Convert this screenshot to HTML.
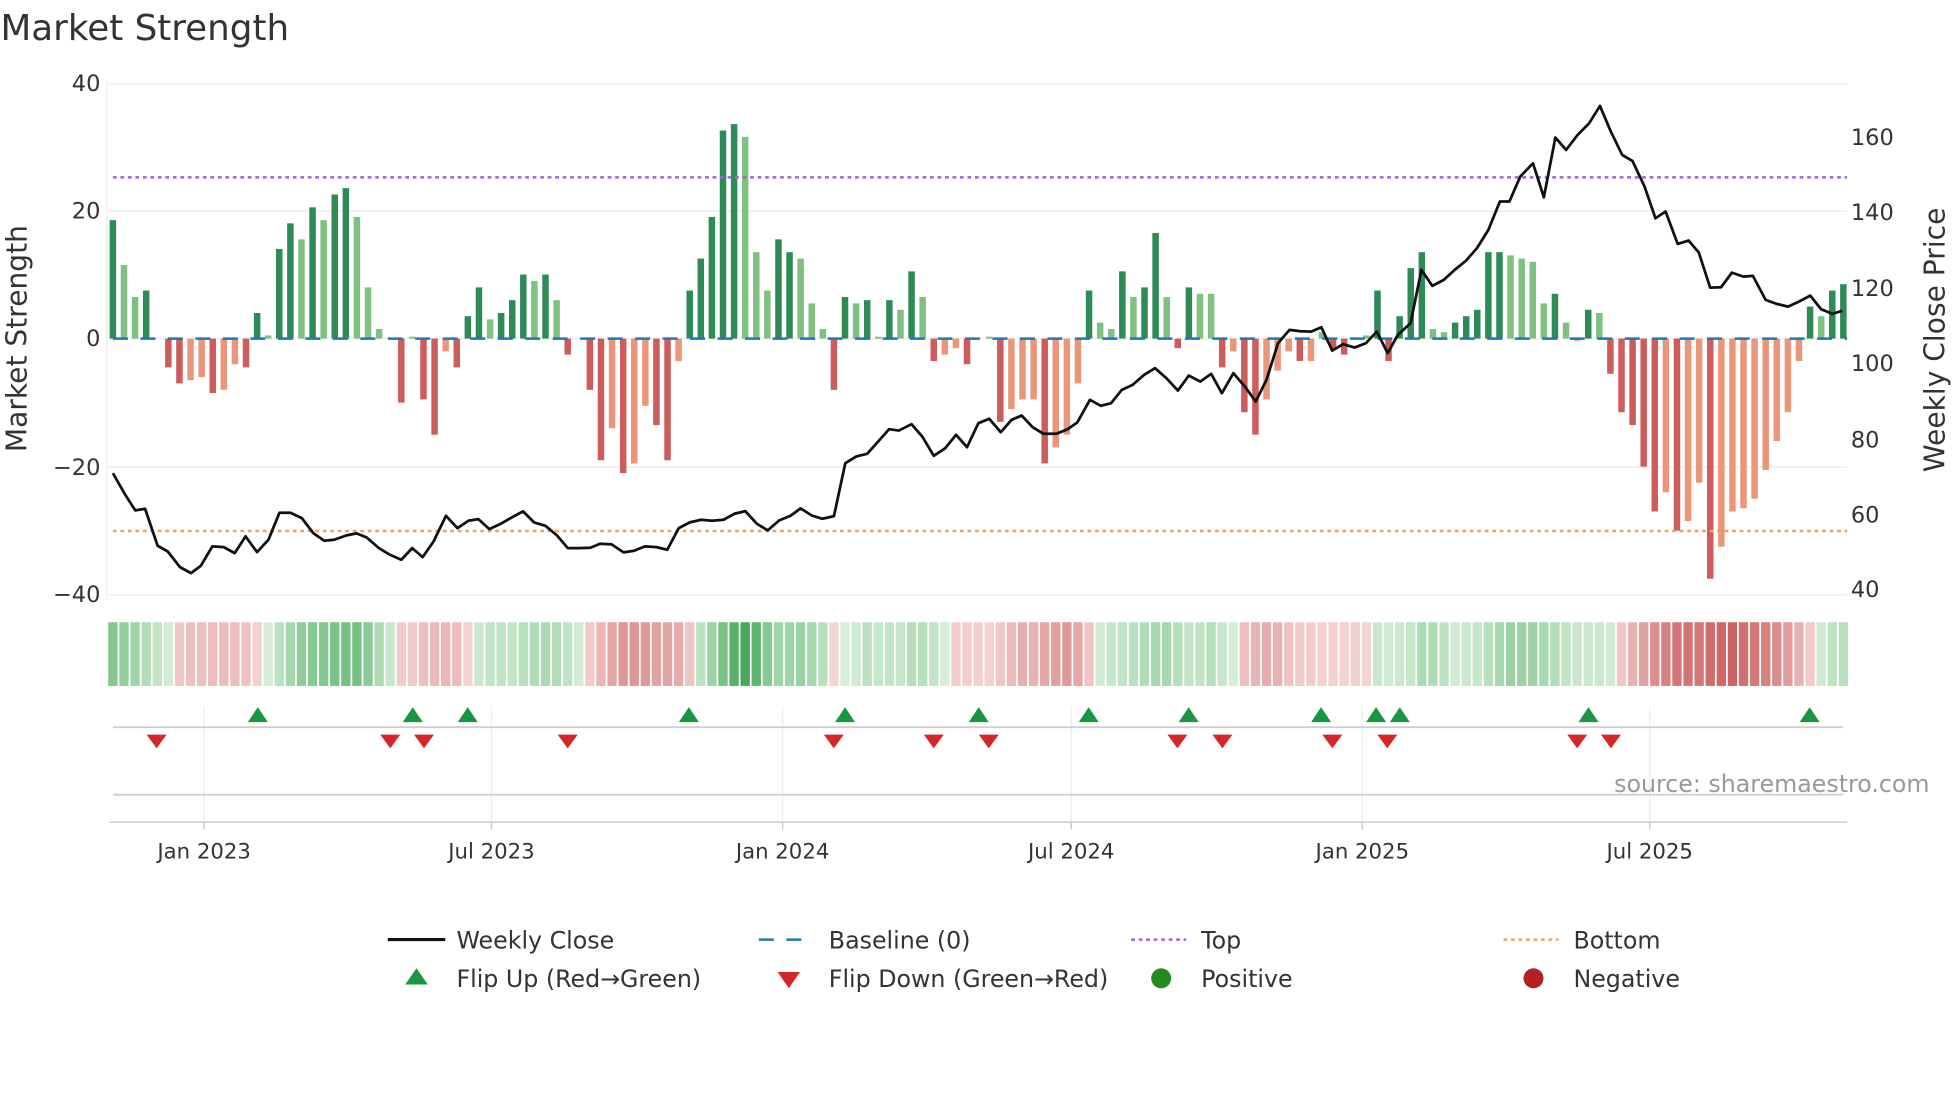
<!DOCTYPE html>
<html><head><meta charset="utf-8"><style>
html,body{margin:0;padding:0;background:#fff;}
svg{display:block;font-family:"DejaVu Sans","Liberation Sans",sans-serif;}
</style></head><body>
<svg id="s" width="1960" height="1102" viewBox="0 0 1568 882" xmlns="http://www.w3.org/2000/svg">
<rect width="1568" height="882" fill="#fff"/>
<g stroke="#eeeeee" stroke-width="1.2">
<line x1="87" y1="67" x2="1478" y2="67"/><line x1="87" y1="169" x2="1478" y2="169"/>
<line x1="87" y1="271" x2="1478" y2="271"/><line x1="87" y1="374" x2="1478" y2="374"/>
<line x1="87" y1="476" x2="1478" y2="476"/>
<line x1="85" y1="64" x2="85" y2="480"/>
</g>
<g stroke="#eeeeee" stroke-width="1">
<line x1="163" y1="565" x2="163" y2="658"/><line x1="393" y1="565" x2="393" y2="658"/>
<line x1="626" y1="565" x2="626" y2="658"/><line x1="857" y1="565" x2="857" y2="658"/>
<line x1="1090" y1="565" x2="1090" y2="658"/><line x1="1320" y1="565" x2="1320" y2="658"/>
</g>
<g id="bars"></g>
<line x1="90" y1="271" x2="1478" y2="271" stroke="#1f77b4" stroke-width="2" stroke-dasharray="12,10"/>
<line x1="90" y1="142" x2="1478" y2="142" stroke="#9966dd" stroke-width="2" stroke-dasharray="3,3"/>
<line x1="90" y1="425" x2="1478" y2="425" stroke="#f0a060" stroke-width="2" stroke-dasharray="3,3"/>
<polyline id="price" fill="none" stroke="#111" stroke-width="2.2" stroke-linejoin="round"/>
<g id="strip"></g>
<line x1="90" y1="582" x2="1475" y2="582" stroke="#cfcfcf" stroke-width="1.5"/>
<line x1="90" y1="636" x2="1475" y2="636" stroke="#cfcfcf" stroke-width="1.5"/>
<g id="marks"></g>
<line x1="87" y1="658" x2="1478" y2="658" stroke="#cccccc" stroke-width="1.2"/>
<g stroke="#cccccc" stroke-width="1.2">
<line x1="163" y1="658" x2="163" y2="664"/><line x1="393" y1="658" x2="393" y2="664"/>
<line x1="626" y1="658" x2="626" y2="664"/><line x1="857" y1="658" x2="857" y2="664"/>
<line x1="1090" y1="658" x2="1090" y2="664"/><line x1="1320" y1="658" x2="1320" y2="664"/>
</g>
<g fill="#333" font-size="17" text-anchor="middle">
<text x="163" y="687">Jan 2023</text><text x="393" y="687">Jul 2023</text>
<text x="626" y="687">Jan 2024</text><text x="857" y="687">Jul 2024</text>
<text x="1090" y="687">Jan 2025</text><text x="1320" y="687">Jul 2025</text>
</g>
<g fill="#333" font-size="18" text-anchor="end">
<text x="80" y="73">40</text><text x="80" y="175">20</text><text x="80" y="277">0</text>
<text x="80" y="380">−20</text><text x="80" y="482">−40</text>
</g>
<g fill="#333" font-size="18">
<text x="1481" y="116">160</text><text x="1481" y="176">140</text><text x="1481" y="237">120</text>
<text x="1481" y="297">100</text><text x="1481" y="358">80</text><text x="1481" y="418">60</text>
<text x="1481" y="478">40</text>
</g>
<text x="21" y="271" transform="rotate(-90 21 271)" text-anchor="middle" font-size="22.5" fill="#333">Market Strength</text>
<text x="1556" y="272" transform="rotate(-90 1556 272)" text-anchor="middle" font-size="22.5" fill="#333">Weekly Close Price</text>
<text x="0" y="32" font-size="28.6" fill="#333">Market Strength</text>
<text x="1544" y="634" font-size="19" fill="#999" text-anchor="end">source: sharemaestro.com</text>
<g font-size="19" fill="#333">
<line x1="310" y1="752" x2="356" y2="752" stroke="#111" stroke-width="2.5"/>
<text x="365" y="759">Weekly Close</text>
<line x1="607" y1="752" x2="651" y2="752" stroke="#1f77b4" stroke-width="2" stroke-dasharray="12,10"/>
<text x="663" y="759">Baseline (0)</text>
<line x1="905" y1="752" x2="949" y2="752" stroke="#9966dd" stroke-width="2" stroke-dasharray="3,3"/>
<text x="961" y="759">Top</text>
<line x1="1203" y1="752" x2="1247" y2="752" stroke="#f0a060" stroke-width="2" stroke-dasharray="3,3"/>
<text x="1259" y="759">Bottom</text>
<polygon points="324,788 342,788 333,775" fill="#1a9641"/>
<text x="365" y="790">Flip Up (Red→Green)</text>
<polygon points="622,778 640,778 631,791" fill="#d62728"/>
<text x="663" y="790">Flip Down (Green→Red)</text>
<circle cx="929" cy="783" r="8" fill="#228b22"/>
<text x="961" y="790">Positive</text>
<circle cx="1227" cy="783" r="8" fill="#b22222"/>
<text x="1259" y="790">Negative</text>
</g>
</svg>
<script>
var NS="http://www.w3.org/2000/svg";
function el(t,a,p){var e=document.createElementNS(NS,t);for(var k in a)e.setAttribute(k,a[k]);p.appendChild(e);return e;}
var v="18.5D 11.5L 6.5L 7.5D 0L -4.5R -7R -6.5S -6S -8.5R -8S -4S -4.5R 4D 0.5L 14D 18D 15.5L 20.5D 18.5L 22.5D 23.5D 19L 8L 1.5L 0L -10R 0.3L -9.5R -15R -2S -4.5R 3.5D 8D 3L 4D 6D 10D 9L 10D 6L -2.5R 0L -8R -19R -14S -21R -19.5S -10.5S -13.5R -19R -3.5S 7.5D 12.5D 19D 32.5D 33.5D 31.5L 13.5L 7.5L 15.5D 13.5D 12.5L 5.5L 1.5L -8R 6.5D 5.5L 6D 0.3L 6D 4.5L 10.5D 6.5L -3.5R -2.5S -1.5S -4R 0L 0.3L -13R -11S -9.5S -9.5S -19.5R -17S -15S -7S 7.5D 2.5L 1.5L 10.5D 6.5L 8D 16.5D 6.5L -1.5R 8D 7L 7L -4.5R -2S -11.5R -15R -9.5S -5S -2S -3.5R -3.5S 1L -1.5R -2.5R 0L 0.5L 7.5D -3.5R 3.5D 11D 13.5D 1.5L 1L 2.5D 3.5D 4.5D 13.5D 13.5D 13L 12.5L 12L 5.5L 7D 2.5L -0.3R 4.5D 4L -5.5R -11.5R -13.5R -20R -27R -24S -30R -28.5S -22.5S -37.5R -32.5S -27S -26.5S -25S -20.5S -16S -11.5S -3.5S 5D 3.5L 7.5D 8.5D".split(" ");
var n=v.length,x0=90,x1=1475,st=(x1-x0)/(n-1);
var col={D:"#2e8b57",L:"#80c080",R:"#cd5c5c",S:"#e9967a"};
var bars=document.getElementById("bars"),strip=document.getElementById("strip");
var vals=v.map(function(s){return parseFloat(s);});
function mix(a,b,t){return "rgb("+[0,1,2].map(function(i){return Math.round(a[i]+(b[i]-a[i])*t);}).join(",")+")";}
for(var i=0;i<n;i++){
 var s=v[i],c=s.slice(-1),val=parseFloat(s),x=x0+i*st,y0=271,y=271-val*5.125;
 if(Math.abs(val)>0.05) el("rect",{x:x-2.6,y:Math.min(y,y0),width:5.2,height:Math.abs(y-y0),fill:col[c]},bars);
 var a=0,cn=0;for(var j=Math.max(0,i-2);j<=i;j++){a+=vals[j];cn++;}a/=cn;
 var t=Math.min(1,Math.abs(a)/32),f;
 if(a>=0) f=mix([214,238,216],[70,170,90],t); else f=mix([246,214,214],[204,100,100],t);
 el("rect",{x:x-st/2+0.7,y:498,width:st-1.4,height:51,fill:f},strip);
}
var p2=[[15,100],[40,165],[60,212],[80,207],[105,318],[125,335],[150,382],[172,400],[192,378],[215,320],[238,322],[260,340],[282,290],[305,337],[328,300],[350,219],[372,219],[395,235],[418,280],[440,303],[460,300],[485,287],[505,281],[525,293],[550,325],[572,345],[595,360],[617,325],[638,352],[660,305],[685,228],[708,265],[730,243],[750,238],[772,268],[795,252],[818,232],[840,215],[862,248],[885,258],[908,287],[930,325],[952,325],[975,324],[995,312],[1018,314],[1042,338],[1063,333],[1085,320],[1108,322],[1130,330],[1153,265],[1175,248],[1198,240],[1220,243],[1243,240],[1265,222],[1287,214],[1310,252],[1332,272],[1355,242],[1378,228],[1398,206],[1420,227],[1442,237],[1465,229],[1488,70],[1510,50],[1532,42]];
var p3=[[30,1018],[45,1022],[65,1003],[82,1040],[100,1098],[118,1075],[135,1035],[152,1072],[170,1000],[187,987],[205,1027],[222,990],[238,977],[255,1012],[272,1032],[292,1032],[310,1018],[325,998],[345,930],[362,948],[378,940],[395,900],[412,885],[430,855],[447,835],[465,865],[483,902],[500,857],[518,875],[535,852],[552,910],[570,850],[588,890],[605,935],[622,870],[640,760],[658,720],[675,724],[692,725],[708,712],[725,782],[742,763],[760,773],[778,760],[795,725],[812,790],[828,735],[848,700],[865,540],[882,588],[900,570],[917,540],[935,512],[952,475],[970,420],[988,335],[1003,335],[1020,260],[1040,220],[1057,322],[1075,143],[1092,180],[1110,135],[1128,100],[1145,48],[1162,125],[1180,195],[1196,213],[1215,290],[1232,385],[1248,365],[1267,462],[1284,452],[1300,488],[1318,593],[1335,592],[1352,548],[1370,560],[1385,558],[1405,630],[1422,642],[1440,650],[1457,635],[1475,617],[1492,658],[1510,672],[1525,663]];
var pts=[];
p2.forEach(function(p){pts.push((84+0.398*p[0]).toFixed(1)+","+(352+0.2667*p[1]).toFixed(1));});
p3.forEach(function(p){pts.push((696+0.5102*p[0]).toFixed(1)+","+(72+0.2667*p[1]).toFixed(1));});
document.getElementById("price").setAttribute("points",pts.join(" "));
var mk=document.getElementById("marks");
[206,330,374,551,676,783,871,951,1057,1101,1120,1271,1448].forEach(function(x){el("polygon",{points:(x-8)+",578 "+(x+8)+",578 "+x+",566",fill:"#1a9641"},mk);});
[125,312,339,454,667,747,791,942,978,1066,1110,1262,1289].forEach(function(x){el("polygon",{points:(x-8)+",588 "+(x+8)+",588 "+x+",599",fill:"#d62728"},mk);});
</script>
</body></html>
